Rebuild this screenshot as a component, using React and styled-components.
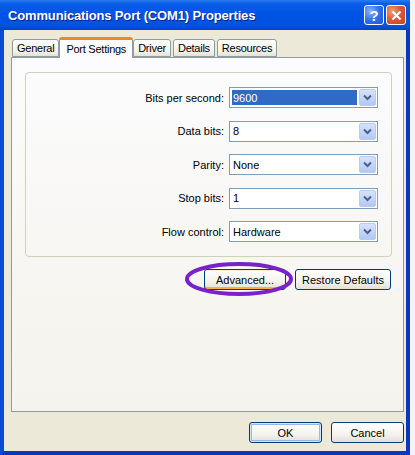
import { styled, createGlobalStyle } from "styled-components";

const GlobalStyle = createGlobalStyle`
  html, body {
    margin: 0;
    padding: 0;
    background: #f4f4f4;
  }
  body {
    font-family: "Liberation Sans", Arial, sans-serif;
    font-size: 11px;
  }
`;

const settings = [
  { label: "Bits per second:", value: "9600", selected: true },
  { label: "Data bits:", value: "8" },
  { label: "Parity:", value: "None" },
  { label: "Stop bits:", value: "1" },
  { label: "Flow control:", value: "Hardware" },
];

const tabs = ["General", "Port Settings", "Driver", "Details", "Resources"];

const Chevron = () => (
  <svg width="9" height="7" viewBox="0 0 9 7">
    <path d="M1 1.5 L4.5 5 L8 1.5" fill="none" stroke="#4d6185" strokeWidth="2" />
  </svg>
);

const Combo = ({ value, selected }) => (
  <ComboBox>
    <ComboValue>
      <ValueText $selected={selected}>{value}</ValueText>
    </ComboValue>
    <DropButton>
      <Chevron />
    </DropButton>
  </ComboBox>
);

export default function App() {
  return (
    <>
      <GlobalStyle />
      <Window>
        <TitleBar>
          <Title>Communications Port (COM1) Properties</Title>
          <CaptionButtons>
            <CaptionButton $kind="help">?</CaptionButton>
            <CaptionButton $kind="close">
              <svg width="11" height="11" viewBox="0 0 11 11">
                <path d="M1.5 1.5 L9.5 9.5 M9.5 1.5 L1.5 9.5" stroke="#fff" strokeWidth="2.2" />
              </svg>
            </CaptionButton>
          </CaptionButtons>
        </TitleBar>
        <Client>
          <TabStrip>
            {tabs.map((t) => (
              <Tab key={t} $active={t === "Port Settings"}>
                {t}
              </Tab>
            ))}
          </TabStrip>
          <Panel>
            <GroupBox>
              {settings.map((s) => (
                <Row key={s.label}>
                  <Label>{s.label}</Label>
                  <Combo value={s.value} selected={s.selected} />
                </Row>
              ))}
            </GroupBox>
            <ButtonRow>
              <Highlighted>
                <Button $width={82} $focus>
                  Advanced...
                </Button>
                <Circle viewBox="0 0 110 36" preserveAspectRatio="none">
                  <ellipse cx="55" cy="18" rx="52" ry="15" fill="none" stroke="#7a22c8" strokeWidth="4" />
                </Circle>
              </Highlighted>
              <Button $width={96}>Restore Defaults</Button>
            </ButtonRow>
          </Panel>
          <Footer>
            <Button $width={73} $default>
              OK
            </Button>
            <Button $width={73}>Cancel</Button>
          </Footer>
        </Client>
      </Window>
    </>
  );
}

const Window = styled.div`
  width: 410px;
  height: 455px;
  display: flex;
  flex-direction: column;
  box-sizing: border-box;
`;

const TitleBar = styled.div`
  height: 30px;
  flex-shrink: 0;
  display: flex;
  align-items: center;
  justify-content: space-between;
  padding: 0 4px 0 8px;
  background: linear-gradient(
    to bottom,
    #2b7bf0 0%,
    #0a5de8 12%,
    #0054e3 45%,
    #0053e1 85%,
    #0042cc 100%
  );
`;

const Title = styled.span`
  color: #fff;
  font-weight: bold;
  font-size: 13px;
  letter-spacing: -0.15px;
  text-shadow: 1px 1px 0 #0a1f8a;
`;

const CaptionButtons = styled.div`
  display: flex;
  gap: 2px;
`;

const CaptionButton = styled.div`
  width: 20px;
  height: 20px;
  box-sizing: border-box;
  border: 1px solid #fff;
  border-radius: 3px;
  display: flex;
  align-items: center;
  justify-content: center;
  color: #fff;
  font-weight: bold;
  font-size: 15px;
  background: ${(p) =>
    p.$kind === "close"
      ? "radial-gradient(circle at 30% 30%, #f0a080 0%, #e0583a 45%, #c8401c 100%)"
      : "radial-gradient(circle at 30% 30%, #8fb4f8 0%, #2f6ff0 50%, #1e55d8 100%)"};
`;

const Client = styled.div`
  flex: 1;
  display: flex;
  flex-direction: column;
  background: #ece9d8;
  border: 4px solid #0a4ad8;
  border-top: none;
  border-bottom-width: 5px;
  border-right-color: #0838c0;
  border-bottom-color: #0838c0;
  padding: 7px 2px 8px 7px;
`;

const TabStrip = styled.div`
  display: flex;
  align-items: flex-end;
  height: 20px;
  padding-left: 1px;
  position: relative;
  z-index: 1;
`;

const Tab = styled.div`
  box-sizing: border-box;
  display: flex;
  align-items: center;
  border: 1px solid #919b9c;
  border-radius: 3px 3px 0 0;
  color: #000;
  letter-spacing: -0.25px;
  height: ${(p) => (p.$active ? "21px" : "18px")};
  margin-bottom: ${(p) => (p.$active ? "-1px" : "0")};
  margin-left: ${(p) => (p.$active ? "-2px" : "0")};
  margin-right: ${(p) => (p.$active ? "0" : "2px")};
  padding: ${(p) => (p.$active ? "0 6px" : "0 4px")};
  border-bottom: ${(p) => (p.$active ? "none" : "1px solid #919b9c")};
  border-top: ${(p) => (p.$active ? "3px solid #e68b2c" : "1px solid #919b9c")};
  background: ${(p) =>
    p.$active ? "#fcfcfe" : "linear-gradient(to bottom, #ffffff, #f3f2ec 70%, #e4e2d8)"};
`;

const Panel = styled.div`
  height: 355px;
  box-sizing: border-box;
  border: 1px solid #919b9c;
  background: linear-gradient(to bottom, #fcfcfe, #f6f5f0 70%, #f4f3ee);
  padding: 14px 11px 0 13px;
`;

const GroupBox = styled.div`
  border: 1px solid #d0d0bf;
  border-radius: 4px;
  padding: 14px 13px 14px 0;
  display: flex;
  flex-direction: column;
  gap: 12.5px;
`;

const Row = styled.div`
  display: grid;
  grid-template-columns: 1fr 149px;
  column-gap: 5px;
  align-items: center;
`;

const Label = styled.span`
  text-align: right;
  color: #000;
`;

const ComboBox = styled.div`
  height: 21px;
  box-sizing: border-box;
  border: 1px solid #7f9db9;
  background: #fff;
  display: flex;
`;

const ComboValue = styled.div`
  flex: 1;
  padding: 2px 1px 2px 2px;
  display: flex;
`;

const ValueText = styled.span`
  flex: 1;
  display: flex;
  align-items: center;
  padding-left: 1px;
  color: ${(p) => (p.$selected ? "#fff" : "#000")};
  background: ${(p) => (p.$selected ? "#316ac5" : "transparent")};
`;

const DropButton = styled.div`
  width: 17px;
  margin: 1px;
  border-radius: 2px;
  box-sizing: border-box;
  border: 1px solid #bacbf3;
  background: linear-gradient(to bottom, #d6e2fc, #c1d3fb 60%, #b3c7f5);
  display: flex;
  align-items: center;
  justify-content: center;
`;

const ButtonRow = styled.div`
  display: flex;
  justify-content: flex-end;
  gap: 9px;
  margin-top: 12px;
  padding-right: 1px;
`;

const Highlighted = styled.div`
  position: relative;
  display: flex;
`;

const Circle = styled.svg`
  position: absolute;
  left: -20px;
  top: -8px;
  width: 110px;
  height: 36px;
  pointer-events: none;
`;

const Button = styled.div`
  width: ${(p) => p.$width}px;
  height: 21px;
  box-sizing: border-box;
  border: 1px solid #003c74;
  border-radius: 3px;
  display: flex;
  align-items: center;
  justify-content: center;
  color: #000;
  background: linear-gradient(to bottom, #ffffff, #f4f3ee 60%, #e3e0d5);
  box-shadow: ${(p) =>
    p.$default
      ? "inset 0 0 0 1px #cee7ff, inset 0 0 0 2px #98b8ea"
      : p.$focus
      ? "inset 0 -2px 0 #f5b142, inset 0 1px 0 #fff1cc"
      : "none"};
`;

const Footer = styled.div`
  display: flex;
  justify-content: flex-end;
  gap: 9px;
  margin-top: 10px;
`;
